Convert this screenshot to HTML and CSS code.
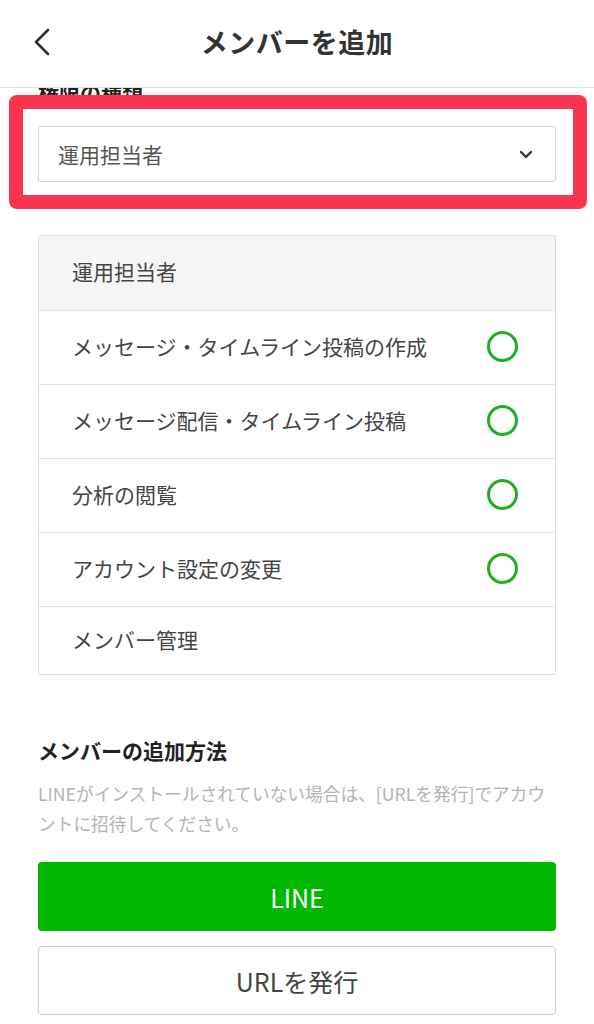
FILE: index.html
```html
<!DOCTYPE html>
<html lang="ja">
<head>
<meta charset="utf-8">
<link rel="stylesheet" href="styles.css">
</head>
<body>
<header class="topbar">
  <span class="back">
    <svg width="18" height="28" viewBox="0 0 18 28"><path d="M15 2 L3 14 L15 26" fill="none" stroke="#333" stroke-width="2.6" stroke-linecap="round" stroke-linejoin="round"/></svg>
  </span>
  <h1 class="title">メンバーを追加</h1>
</header>
<main class="content">
  <div class="label">権限の種類</div>
  <div class="select-wrap">
    <div class="select">
      <span>運用担当者</span>
      <svg width="14" height="9" viewBox="0 0 14 9"><path d="M2 2 L7 7 L12 2" fill="none" stroke="#333" stroke-width="2.4" stroke-linecap="round" stroke-linejoin="round"/></svg>
    </div>
    <div class="highlight"></div>
  </div>

  <div class="table">
    <div class="row head">運用担当者</div>
    <div class="row"><span>メッセージ・タイムライン投稿の作成</span><i class="ok"></i></div>
    <div class="row"><span>メッセージ配信・タイムライン投稿</span><i class="ok"></i></div>
    <div class="row"><span>分析の閲覧</span><i class="ok"></i></div>
    <div class="row"><span>アカウント設定の変更</span><i class="ok"></i></div>
    <div class="row last"><span>メンバー管理</span></div>
  </div>

  <h2 class="section">メンバーの追加方法</h2>
  <p class="desc">LINEがインストールされていない場合は、[URLを発行]でアカウントに招待してください。</p>

  <div class="btn primary">LINE</div>
  <div class="btn secondary">URLを発行</div>
</main>
</body>
</html>
```

FILE: styles.css
```css
* { box-sizing: border-box; }
html, body { margin: 0; padding: 0; background: #fff; }
body {
  font-family: "Noto Sans CJK JP", "Noto Sans", sans-serif;
  color: #333;
  width: 594px;
  overflow: hidden;
}
.topbar {
  position: relative;
  z-index: 2;
  background: #fff;
  height: 88px;
  border-bottom: 1px solid #e2e2e2;
  display: flex;
  align-items: center;
  justify-content: center;
}
.back {
  position: absolute;
  left: 33px;
  top: 28px;
  display: flex;
}
.title {
  margin: 0;
  font-size: 27px;
  font-weight: 700;
  color: #333;
  letter-spacing: 0.5px;
  line-height: 1;
  margin-top: -4px;
}
.content {
  padding: 0 38px;
  margin-top: -10px;
}
.label {
  font-size: 21px;
  font-weight: 700;
  color: #222;
  line-height: 28px;
  margin-bottom: 20px;
}
.select-wrap { position: relative; }
.select {
  height: 56px;
  border: 1px solid #d6d6d6;
  border-radius: 3px;
  display: flex;
  align-items: center;
  justify-content: space-between;
  padding: 0 22px 0 19px;
  font-size: 21px;
  color: #555;
}
.highlight {
  position: absolute;
  left: -29px;
  right: -31px;
  top: -31px;
  bottom: -27px;
  border: 14px solid #f9344f;
  border-radius: 8px;
  z-index: 3;
  pointer-events: none;
}
.table {
  margin-top: 53px;
  border: 1px solid #dedede;
  border-radius: 2px;
}
.row {
  height: 74px;
  border-bottom: 1px solid #e2e2e2;
  display: flex;
  align-items: center;
  justify-content: space-between;
  padding: 0 37px 0 33px;
  font-size: 21px;
  color: #444;
  padding-bottom: 4px;
}
.row.head { background: #f5f5f5; height: 75px; }
.row.last { border-bottom: none; height: 67px; }
.ok {
  width: 31px;
  height: 31px;
  border: 3px solid #22ad22;
  border-radius: 50%;
  display: block;
  flex: none;
  margin-top: 2px;
}
.section {
  margin: 60px 0 0;
  font-size: 21px;
  font-weight: 700;
  color: #222;
  line-height: 30px;
}
.desc {
  margin: 13px 0 0;
  font-size: 17.7px;
  line-height: 30px;
  color: #b4b4b4;
}
.btn {
  height: 69px;
  border-radius: 4px;
  display: flex;
  align-items: center;
  justify-content: center;
  font-size: 25px;
}
.btn.primary {
  margin-top: 24px;
  background: #00b900;
  color: #fff;
}
.btn.secondary {
  margin-top: 15px;
  border: 1px solid #cfcfcf;
  color: #444;
  background: #fff;
}
```
